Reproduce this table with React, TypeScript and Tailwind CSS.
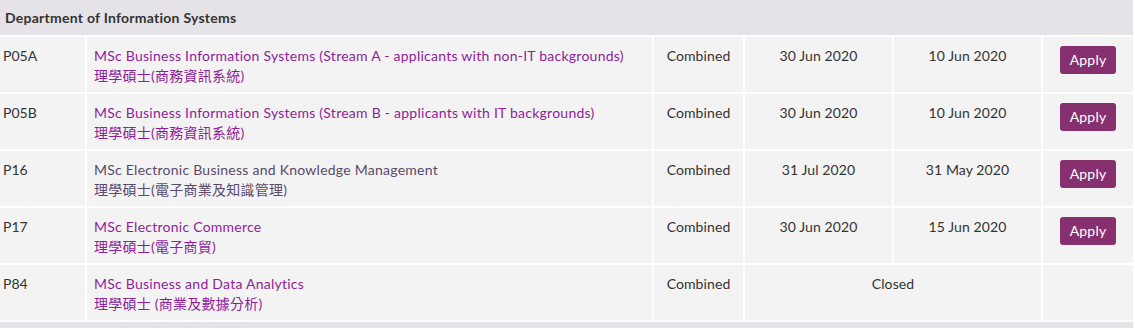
const programmes = [
  {
    code: "P05A",
    en: "MSc Business Information Systems (Stream A - applicants with non-IT backgrounds)",
    zh: "理學碩士(商務資訊系統)",
    mode: "Combined",
    deadline: "30 Jun 2020",
    early: "10 Jun 2020",
    visited: false,
  },
  {
    code: "P05B",
    en: "MSc Business Information Systems (Stream B - applicants with IT backgrounds)",
    zh: "理學碩士(商務資訊系統)",
    mode: "Combined",
    deadline: "30 Jun 2020",
    early: "10 Jun 2020",
    visited: false,
  },
  {
    code: "P16",
    en: "MSc Electronic Business and Knowledge Management",
    zh: "理學碩士(電子商業及知識管理)",
    mode: "Combined",
    deadline: "31 Jul 2020",
    early: "31 May 2020",
    visited: true,
  },
  {
    code: "P17",
    en: "MSc Electronic Commerce",
    zh: "理學碩士(電子商貿)",
    mode: "Combined",
    deadline: "30 Jun 2020",
    early: "15 Jun 2020",
    visited: false,
  },
  {
    code: "P84",
    en: "MSc Business and Data Analytics",
    zh: "理學碩士 (商業及數據分析)",
    mode: "Combined",
    deadline: null,
    early: null,
    visited: false,
  },
];

const cell = "bg-[#f3f3f3] pt-[9px] h-[55px]";

export default function App() {
  return (
    <div
      className="h-[328px] w-[1135px] bg-white text-[14px] leading-[20px] text-[#333333] [font-variant-ligatures:none]"
      style={{ fontFamily: 'Lato, "Noto Sans CJK TC", sans-serif' }}
    >
      <div className="w-[1133px] bg-white">
        <div className="flex h-[35px] items-center bg-[#e5e3e8] px-[5px] font-bold tracking-[0.25px] text-[#333333]">
          Department of Information Systems
        </div>
        <div className="mt-[2px] grid grid-cols-[85px_565px_89px_147px_147px_90px] gap-[2px]">
          {programmes.map((p) => (
            <div key={p.code} className="contents">
              <div className={`${cell} pl-[3px]`}>{p.code}</div>
              <div className={`${cell} pl-[7px] tracking-[0.25px]`}>
                <a
                  href="#"
                  className={p.visited ? "text-[#594a6b]" : "text-[#8e1e99]"}
                >
                  {p.en}
                  <br />
                  {p.zh}
                </a>
              </div>
              <div className={`${cell} text-center tracking-[0.1px]`}>{p.mode}</div>
              {p.deadline ? (
                <>
                  <div className={`${cell} text-center tracking-[0.1px]`}>{p.deadline}</div>
                  <div className={`${cell} text-center tracking-[0.1px]`}>{p.early}</div>
                </>
              ) : (
                <div className={`${cell} col-span-2 text-center tracking-[0.1px]`}>Closed</div>
              )}
              <div className={`${cell} flex justify-center`}>
                {p.deadline && (
                  <button className="h-[28px] w-[56px] rounded-[3px] bg-[#87306f] pb-[1px] text-[14px] tracking-[0.2px] text-white">
                    Apply
                  </button>
                )}
              </div>
            </div>
          ))}
        </div>
        <div className="mt-[2px] h-[6px] bg-[#e5e3e8]" />
      </div>
    </div>
  );
}
